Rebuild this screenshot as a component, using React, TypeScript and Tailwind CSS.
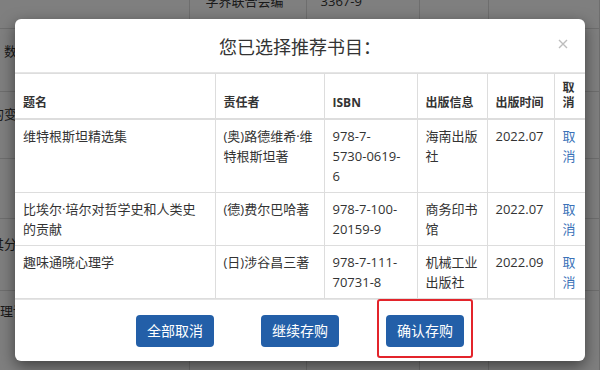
import React from "react";

const books = [
  {
    title: ["维特根斯坦精选集"],
    author: ["(奥)路德维希·维", "特根斯坦著"],
    isbn: ["978-7-", "5730-0619-", "6"],
    press: ["海南出版", "社"],
    date: "2022.07",
  },
  {
    title: ["比埃尔·培尔对哲学史和人类史", "的贡献"],
    author: ["(德)费尔巴哈著"],
    isbn: ["978-7-100-", "20159-9"],
    press: ["商务印书", "馆"],
    date: "2022.07",
  },
  {
    title: ["趣味通晓心理学"],
    author: ["(日)涉谷昌三著"],
    isbn: ["978-7-111-", "70731-8"],
    press: ["机械工业", "出版社"],
    date: "2022.09",
  },
];

// page behind the dialog (mostly covered)
const pageRows = [
  { h: "h-[40px]", cells: [["", "pl-[27px] pt-[6px]"], ["学界联合会编", "pl-[16px] pt-[2px]"], ["3367-9", "pl-[14px] pt-[2px]"], ["", "pt-[6px]"], ["", "pt-[6px]"]] },
  { h: "h-[63px]", cells: [["数", "pl-[27px] pt-[12px]"], ["", "pt-[10px]"], ["", "pt-[10px]"], ["", "pt-[10px]"], ["出版社", "pl-[8px] pt-[9px]"]] },
  { h: "h-[67px]", cells: [["的变化", "pl-[14px] pt-[12px]"], ["", "pt-[10px]"], ["", "pt-[10px]"], ["", "pt-[10px]"], ["", "pt-[10px]"]] },
  { h: "h-[60px]", cells: [["", "pt-[10px]"], ["", "pt-[10px]"], ["", "pt-[10px]"], ["", "pt-[10px]"], ["社", "pl-[8px] pt-[9px]"]] },
  { h: "h-[72px]", cells: [["其分析", "pl-[14px] pt-[15px]"], ["", "pt-[10px]"], ["", "pt-[10px]"], ["", "pt-[10px]"], ["社", "pl-[8px] pt-[24px]"]] },
  { h: "h-[110px]", cells: [["理论", "pl-[23px] pt-[10px]"], ["", "pt-[10px]"], ["", "pt-[10px]"], ["", "pt-[10px]"], ["出版\n社", "pl-[8px] pt-[13px]"]] },
];

function Lines({ lines }: { lines: string[] }) {
  return (
    <>
      {lines.map((l, i) => (
        <div key={i} className="whitespace-nowrap">
          {l}
        </div>
      ))}
    </>
  );
}

const th =
  "border-t border-r border-b-2 border-[#ddd] px-[8px] pt-[6px] pb-[8px] align-bottom text-left text-[12px] leading-[15px] font-bold";
const td = "border border-[#ddd] px-[8px] py-[6px] align-top";

export default function App() {
  return (
    <div className="relative h-[370px] w-[600px] overflow-hidden bg-white font-['Open_Sans','Noto_Sans_CJK_SC',sans-serif] text-[13px] leading-[20px] text-[#333]">
      {/* underlying page */}
      <table className="-ml-[24px] -mt-[12px] table-fixed border-collapse">
        <colgroup>
          <col className="w-[256px]" />
          <col className="w-[123px]" />
          <col className="w-[129px]" />
          <col className="w-[88px]" />
          <col className="w-[128px]" />
        </colgroup>
        <tbody>
          {pageRows.map((r, i) => (
            <tr key={i} className={r.h}>
              {r.cells.map(([text, cls], j) => (
                <td key={j} className={`border border-[#ddd] align-top whitespace-pre ${cls}`}>
                  {text}
                </td>
              ))}
            </tr>
          ))}
        </tbody>
      </table>

      <div className="absolute inset-0 bg-black/50" />

      {/* dialog */}
      <div className="absolute left-[15px] top-[19px] w-[570px] overflow-hidden rounded-[6px] bg-white shadow-[0_5px_15px_rgba(0,0,0,0.5)]">
        <div className="relative flex h-[54px] items-center justify-center border-b border-[#e5e5e5]">
          <h4 className="font-['Noto_Sans_CJK_SC',sans-serif] text-[18px] leading-[22px] text-[#333]">
            您已选择推荐书目：
          </h4>
          <button className="absolute right-[16px] top-[19px] flex h-[12px] w-[12px] items-center justify-center">
            <svg width="10" height="10" viewBox="0 0 10 10" fill="none" stroke="#bdbdbd" strokeWidth="1.4">
              <path d="M1 1l8 8M9 1l-8 8" />
            </svg>
          </button>
        </div>

        <table className="w-full table-fixed border-collapse">
          <colgroup>
            <col className="w-[200px]" />
            <col className="w-[109px]" />
            <col className="w-[93px]" />
            <col className="w-[70px]" />
            <col className="w-[67px]" />
            <col className="w-[31px]" />
          </colgroup>
          <thead>
            <tr>
              <th className={th}>题名</th>
              <th className={th}>责任者</th>
              <th className={th}>ISBN</th>
              <th className={th}>出版信息</th>
              <th className={th}>出版时间</th>
              <th className={`${th} border-r-0`}>
                <Lines lines={["取", "消"]} />
              </th>
            </tr>
          </thead>
          <tbody>
            {books.map((b, i) => (
              <tr key={i}>
                <td className={`${td} border-l-0`}>
                  <Lines lines={b.title} />
                </td>
                <td className={td}>
                  <Lines lines={b.author} />
                </td>
                <td className={td}>
                  <Lines lines={b.isbn} />
                </td>
                <td className={td}>
                  <Lines lines={b.press} />
                </td>
                <td className={td}>{b.date}</td>
                <td className={`${td} border-r-0`}>
                  <a href="#" className="text-[#3a72b8]">
                    <Lines lines={["取", "消"]} />
                  </a>
                </td>
              </tr>
            ))}
          </tbody>
        </table>

        <div className="flex justify-center gap-[47px] border-t border-[#e5e5e5] pb-[14px] pt-[15px]">
          <button className="h-[32px] w-[78px] rounded-[4px] bg-[#235fa8] text-[14px] text-white">全部取消</button>
          <button className="h-[32px] w-[78px] rounded-[4px] bg-[#235fa8] text-[14px] text-white">继续存购</button>
          <div className="relative">
            <button className="h-[32px] w-[78px] rounded-[4px] bg-[#235fa8] text-[14px] text-white">确认存购</button>
            <div className="pointer-events-none absolute -bottom-[11px] -left-[9px] -right-[9px] -top-[16px] rounded-[3px] border-2 border-[#e3242b]" />
          </div>
        </div>
      </div>
    </div>
  );
}
